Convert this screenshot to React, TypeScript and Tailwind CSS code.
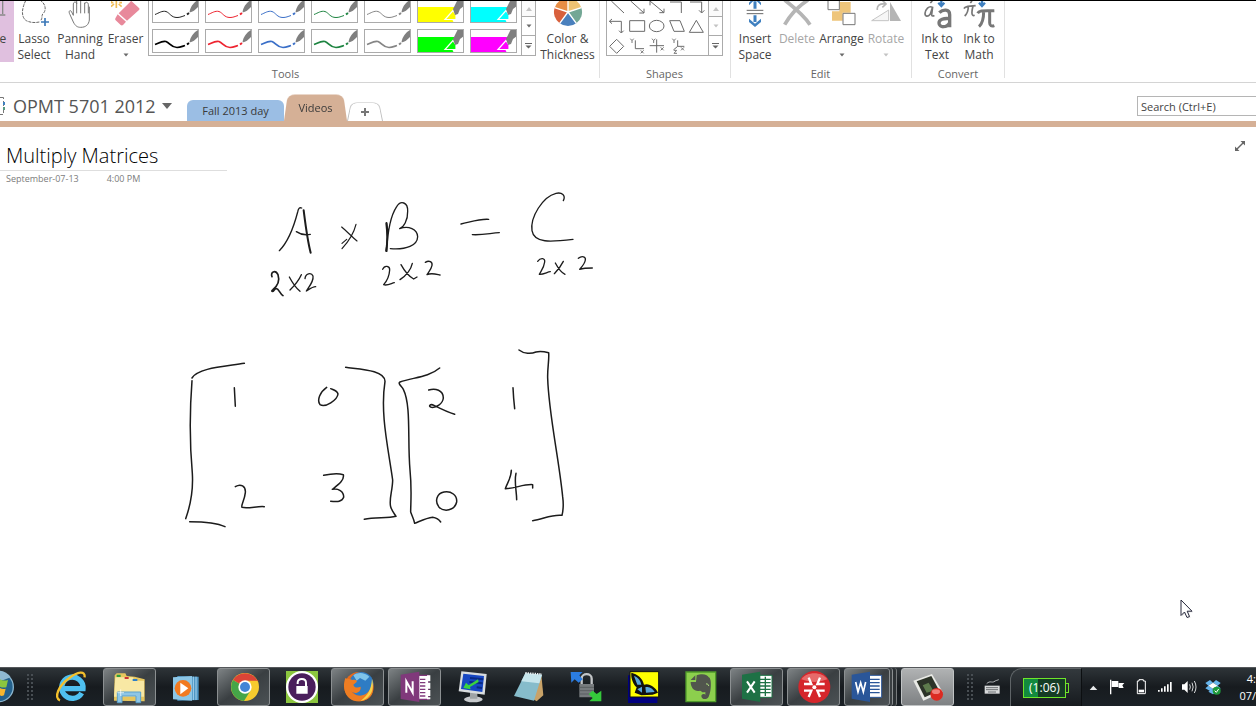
import React from "react";

type IconProps = { box: string; w?: number; h?: number; children: React.ReactNode };

function Icon({ box, w = 30, h = 30, children }: IconProps) {
  return (
    <svg width={w} height={h} viewBox={box} fill="none" aria-hidden="true" className="block shrink-0">
      {children}
    </svg>
  );
}

function Arrow({ faded = false }: { faded?: boolean }) {
  return (
    <svg width="6" height="4" viewBox="0 0 6 4" aria-hidden="true">
      <path d="M0.500 0.500H5.500L3 3.500z" fill={faded ? "#c3c3c3" : "#6a6a6a"} />
    </svg>
  );
}

type ToolProps = {
  lines: string[];
  width: string;
  icon?: React.ReactNode;
  menu?: boolean;
  disabled?: boolean;
  active?: boolean;
};

function Tool({ lines, width, icon, menu, disabled, active }: ToolProps) {
  return (
    <button
      type="button"
      disabled={disabled}
      className={`flex h-[61px] shrink-0 flex-col items-center whitespace-nowrap text-xs leading-4 ${width} ${
        active ? "bg-[#e0c0df]" : ""
      } ${disabled ? "text-[#a6a6a6]" : "text-[#444444]"}`}
    >
      <span className="flex h-[30px] items-start">{icon}</span>
      {lines.map((l) => (
        <span key={l}>{l}</span>
      ))}
      {menu && (
        <span className="flex h-4 items-center">
          <Arrow faded={disabled} />
        </span>
      )}
    </button>
  );
}

function Group({ label, className = "", children }: { label: string; className?: string; children: React.ReactNode }) {
  return (
    <section aria-label={label} className="flex shrink-0">
      <div className={`flex flex-col ${className}`}>
        <div className="flex h-[65px] items-start">{children}</div>
        <div className="text-center text-[11px] leading-4 text-[#666666]">{label}</div>
      </div>
      <div className="h-[77px] w-px bg-[#e1e1e1]" />
    </section>
  );
}

function GalleryScroll({ faded = false }: { faded?: boolean }) {
  return (
    <div className="flex w-[14px] flex-col divide-y divide-[#ababab] border-l border-[#ababab]">
      <button type="button" aria-label="Scroll up" className="flex h-4 items-center justify-center bg-[#fbfbfb]">
        <svg width="6" height="4" viewBox="0 0 6 4"><path d="M0 4H6L3 0z" fill="#c3c3c3" /></svg>
      </button>
      <button type="button" aria-label="Scroll down" className="flex h-[19px] items-center justify-center">
        <Arrow faded={faded} />
      </button>
      <button type="button" aria-label="More" className="flex h-[19px] items-center justify-center">
        <svg width="7" height="6" viewBox="0 0 7 6"><path d="M0 0H7V1H0zM0.500 2.500H6.500L3.500 5.500z" fill="#666" /></svg>
      </button>
    </div>
  );
}

function Pen({ color, thick }: { color: string; thick?: boolean }) {
  return (
    <>
      <path d="M3 15.500C7 14 10 11.500 14 12.500C18 14 19 18.500 25 18.500C28 18.500 30 17.500 33 16.500" stroke={color} strokeWidth={thick ? 1.700 : 1} fill="none" />
      <path d="M35 15.500l2-1.500" stroke={color} strokeWidth="2" />
      <path d="M37.500 13.500C38 8 42 3 46 1V8C43 11 41 13 37.500 13.500z" fill="#7f7f7f" />
    </>
  );
}

function Marker({ color }: { color: string }) {
  return (
    <>
      <path d="M0 8H38L35 20L37 24H0z" fill={color} />
      <path d="M28 20.500L36 11.500L39 16V20.500z" stroke="#fff" strokeWidth="1.200" fill={color} />
      <path d="M36 10L39 4L41 0H47V7L43 10L41 15L38 16z" fill="#7f7f7f" />
    </>
  );
}

const inks = ["#222222", "#ee2430", "#3a6fc8", "#1d8440", "#858585"];

function PenRow({ thick }: { thick?: boolean }) {
  const markers = thick ? ["#00ff00", "#ff00ff"] : ["#ffff00", "#00ffff"];
  const cell = `w-[47px] overflow-hidden border border-[#ababab] ${thick ? "h-6" : "h-[22px] border-t-0"}`;
  const box = thick ? "1 1 45 22" : "1 2 45 21";
  return (
    <div className="flex gap-[6px]">
      {inks.map((c) => (
        <button key={c} type="button" aria-label="Pen" className={cell}>
          <Icon box={box} w={45} h={thick ? 22 : 21}>
            <Pen color={thick && c === "#222222" ? "#000" : c} thick={thick} />
          </Icon>
        </button>
      ))}
      {markers.map((c) => (
        <button key={c} type="button" aria-label="Highlighter" className={cell}>
          <Icon box={box} w={45} h={thick ? 22 : 21}>
            <Marker color={c} />
          </Icon>
        </button>
      ))}
    </div>
  );
}

function Ribbon() {
  return (
    <div className="flex h-[83px] overflow-hidden border-b border-t border-b-[#d4d4d4] border-t-black bg-white">
      <Group label="Tools" className="-ml-8 pl-1">
        <Tool
          active
          width="w-[42px]"
          lines={["Type"]}
          icon={
            <Icon box="-66 3 90 90">
              <path d="M-8 3V42M-16 45H-8M0 45H-8" stroke="#888" strokeWidth="4" transform="translate(16 0)" />
            </Icon>
          }
        />
        <Tool
          width="w-10"
          lines={["Lasso", "Select"]}
          icon={
            <Icon box="57 3 90 90">
              <path d="M120 0C138 12 140 32 128 42C124 50 128 54 122 62M118 66C100 70 84 66 76 60C66 50 66 36 69 24C72 12 74 8 78 0" stroke="#666" strokeWidth="3" strokeDasharray="9 3" />
              <path d="M135 54V78M123 66H147" stroke="#3b78b8" strokeWidth="5" />
            </Icon>
          }
        />
        <Tool
          width="w-[52px]"
          lines={["Panning", "Hand"]}
          icon={
            <Icon box="195 3 90 90">
              <path d="M220 46V12C221 4 229 4 230 12V0M230 40V8M242 40V0M254 40V8M254 12C256 4 265 6 265 14V40M220 46L214 34C208 28 205 36 210 44L220 66C226 78 232 82 242 82C258 82 266 74 268 60V20" stroke="#777" strokeWidth="3" strokeLinejoin="round" />
            </Icon>
          }
        />
        <Tool
          width="w-[39px]"
          lines={["Eraser"]}
          menu
          icon={
            <Icon box="331 3 90 90">
              <path d="M347 0V24M335 0L330 4M331 20L340 12M363 20L354 12M331 8H338M356 8H364" stroke="#f0bb55" strokeWidth="5" />
              <path d="M393 4L415 24C417 26 417 28 415 30L379 62L354 40L389 5C390 3 392 3 393 4z" fill="#e8899b" />
              <path d="M351 43L376 65L367 75C365 77 362 77 360 75L345 61C343 59 343 56 345 53z" fill="#e8899b" />
            </Icon>
          }
        />
        <div className="ml-[3px] flex h-[55px] border-b border-l border-r border-[#ababab]">
          <div className="flex flex-col gap-[6px] pb-px pl-[3px] pr-1">
            <PenRow />
            <PenRow thick />
          </div>
          <GalleryScroll />
        </div>
        <Tool
          width="w-[63px]"
          lines={["Color &", "Thickness"]}
          icon={
            <Icon box="108 3 90 90">
              <path d="M153 36V-6A42 42 0 0 1 193 23z" fill="#eec373" />
              <path d="M153 36L193 23A42 42 0 0 1 178 70z" fill="#73a795" />
              <path d="M153 36L178 70A42 42 0 0 1 128 70z" fill="#4a80bd" />
              <path d="M153 36L128 70A42 42 0 0 1 113 23z" fill="#d8603c" />
              <path d="M153 36L113 23A42 42 0 0 1 153-6z" fill="#e88e45" />
              <path d="M153 36V-6M153 36L193 23M153 36L178 70M153 36L128 70M153 36L113 23" stroke="#fff" strokeWidth="4" />
            </Icon>
          }
        />
      </Group>

      <Group label="Shapes" className="pl-[6px] pr-[7px]">
        <div className="flex h-[55px] border-b border-l border-r border-[#ababab]">
          <Icon box="275 3 303 162" w={101} h={54}>
            <g stroke="#6a6a6a" strokeWidth="3">
              <path d="M288 3L326 39M346 3L386 39M386 26V39H372M404 3L446 38M404 16V3M446 26V38H432M464 6H498V39M524 6H559V38M551 31L559 39L567 31" />
              <path d="M283 64H318V98M290 57L282 64L290 71M311 92L318 99L325 92" />
              <path d="M343 62H388V94H343zM463 62H494L507 94H476zM522 97L543 61L564 97z" />
              <ellipse cx="424" cy="78" rx="22" ry="17" />
              <path d="M283 139L304 118L325 139L304 160z" />
              <path d="M360 121V146H386M403 137H446M424 118V158M487 121V139H507M487 139L474 150" />
            </g>
            <g stroke="#777" strokeWidth="3">
              <path d="M345 116L350 122L355 116M350 122V129M376 151L385 160M385 151L376 160M410 116L415 122L420 116M415 122V129M436 142L445 151M445 142L436 151M471 116L476 122L481 116M476 122V129M497 142L506 151M506 142L497 151M476 151H484L476 160H485" />
            </g>
          </Icon>
          <GalleryScroll faded />
        </div>
      </Group>

      <Group label="Edit" className="pl-[3px] pr-1">
        <Tool
          width="w-[42px]"
          lines={["Insert", "Space"]}
          icon={
            <Icon box="29 3 90 90">
              <path d="M49 31H99M49 41H99" stroke="#666" strokeWidth="3" />
              <path d="M74 26V4M74 46V66" stroke="#3f80c0" strokeWidth="9" />
              <path d="M56 16L74-2L92 16V8L74-10L56 8zM56 56L74 71L92 56V66L74 81L56 66z" fill="#3f80c0" />
            </Icon>
          }
        />
        <Tool
          width="w-[42px]"
          disabled
          lines={["Delete"]}
          icon={
            <Icon box="156 3 90 90">
              <path d="M164 0C182 14 222 46 240 74" stroke="#b5b5b5" strokeWidth="11" />
              <path d="M234 0C206 18 182 42 164 74" stroke="#b5b5b5" strokeWidth="11" />
            </Icon>
          }
        />
        <Tool
          width="w-[47px]"
          lines={["Arrange"]}
          menu
          icon={
            <Icon box="289 3 90 90">
              <path d="M326 6H360V38H326zM304 34H336V62H304z" fill="#eec57b" />
              <path d="M292 0H326V29H292z" fill="#fff" stroke="#777" strokeWidth="3" />
              <path d="M337 40H373V74H337z" fill="#fff" stroke="#777" strokeWidth="3" />
            </Icon>
          }
        />
        <Tool
          width="w-[42px]"
          disabled
          lines={["Rotate"]}
          menu
          icon={
            <Icon box="423 3 90 90">
              <path d="M425 62L476 30V62z" fill="#f6f6f6" stroke="#c4c4c4" strokeWidth="3" />
              <path d="M480 6L513 63H480z" fill="#b5b5b5" />
              <path d="M442 30C440 16 450 10 466 12M458 2L468 12L457 22" stroke="#b5b5b5" strokeWidth="5" />
            </Icon>
          }
        />
      </Group>

      <Group label="Convert" className="px-1">
        <Tool
          width="w-[42px]"
          lines={["Ink to", "Text"]}
          icon={
            <Icon box="575 3 90 90">
              <path d="M606 22C596 16 585 28 584 40C584 50 592 52 600 42L607 20L604 44C604 49 609 49 612 46M600 9L606 3" stroke="#777" strokeWidth="5" />
              <path d="M633 0V14M624 8L633 18L642 8" stroke="#3f80c0" strokeWidth="7" />
              <path d="M627 38C637 28 658 26 658 44V82M658 56C640 54 626 58 626 69C626 84 650 84 658 68" stroke="#777" strokeWidth="10" />
            </Icon>
          }
        />
        <Tool
          width="w-[42px]"
          lines={["Ink to", "Math"]}
          icon={
            <Icon box="700 3 96 90" w={32}>
              <path d="M703 26C708 16 716 20 738 17M716 19C716 32 712 42 705 48M730 18C726 34 724 50 735 46M722 9L727 3" stroke="#777" strokeWidth="5" />
              <path d="M757 0V14M748 8L757 18L766 8" stroke="#3f80c0" strokeWidth="7" />
              <path d="M744 40C750 30 758 33 794 32M762 34C762 54 760 70 748 80M780 34V68C780 78 786 80 794 77" stroke="#777" strokeWidth="9" />
            </Icon>
          }
        />
      </Group>
    </div>
  );
}

function Tabs() {
  return (
    <div className="flex h-[44px] items-end border-b-[6px] border-[#d5b096] bg-white">
      <div className="flex h-full w-[187px] shrink-0 items-center pt-2">
        <svg width="5" height="20" viewBox="0 0 5 20" aria-hidden="true" className="shrink-0">
          <path d="M0 1.500H3.500V18.500H0" stroke="#777" fill="none" strokeDasharray="5 2" />
          <path d="M3 6H5V9H3z" fill="#3f80c0" />
          <path d="M3 11H5V14H3z" fill="#5a9a80" />
        </svg>
        <button type="button" className="flex items-center gap-[6px] whitespace-nowrap pl-2 text-lg leading-6 text-[#555555]">
          OPMT 5701 2012
          <svg width="10" height="6" viewBox="0 0 10 6" aria-hidden="true"><path d="M0 0H10L5 6z" fill="#666" /></svg>
        </button>
      </div>
      <nav className="flex flex-1 items-end text-[11px] leading-4 text-[#3a3a3a]">
        <button type="button" className="h-[21px] w-[97px] whitespace-nowrap rounded-t-md bg-[#9bbee4] text-center">
          Fall 2013 day
        </button>
        <button
          type="button"
          className="relative isolate h-[26px] w-[63px] text-center before:absolute before:inset-x-0 before:bottom-0 before:-z-10 before:h-[31px] before:origin-bottom before:rounded-t-lg before:bg-[#d5b096] before:[transform:perspective(60px)_rotateX(15deg)]"
        >
          Videos
        </button>
        <button
          type="button"
          aria-label="Add section"
          className="relative isolate flex h-[19px] w-[36px] items-center justify-center before:absolute before:inset-x-0 before:bottom-0 before:-z-10 before:h-[26px] before:origin-bottom before:rounded-t-lg before:border before:border-b-0 before:border-[#c0c0c0] before:bg-white before:[transform:perspective(40px)_rotateX(25deg)]"
        >
          <svg width="8" height="8" viewBox="0 0 8 8" aria-hidden="true"><path d="M3 0H5V3H8V5H5V8H3V5H0V3H3z" fill="#777" /></svg>
        </button>
      </nav>
      <input
        type="text"
        aria-label="Search"
        placeholder="Search (Ctrl+E)"
        className="mb-[5px] h-5 w-[119px] shrink-0 border border-r-0 border-[#b5b5b5] px-[3px] text-[11px] text-[#444444] placeholder:text-[#444444]"
      />
    </div>
  );
}

function Ink() {
  return (
    <svg width="600" height="360" viewBox="0 180 600 360" fill="none" className="block" role="img" aria-label="Handwritten matrix multiplication">
      <g transform="translate(250 180) scale(0.33333)" stroke="#1c1c1c" strokeWidth="4" strokeLinecap="round" strokeLinejoin="round">
        <path d="M88 212C112 188 130 146 143 96C145 86 148 81 155 84" />
        <path d="M161 91C166 130 172 180 182 218" strokeWidth="6" />
        <path d="M139 155C152 164 166 166 181 163" />
        <path d="M275 141C290 154 306 170 321 183M318 133C312 158 296 184 276 206M290 178L276 190" strokeWidth="3.500" />
        <path d="M410 128C416 158 413 188 408 213L410 214C412 170 420 110 440 80C452 60 474 66 473 94C474 122 460 142 449 146C476 136 502 148 503 170C502 196 470 210 421 206" />
        <path d="M409 130C413 160 412 190 409 213" strokeWidth="6" />
        <path d="M633 132C662 126 688 116 716 118M667 164C696 166 720 160 748 158" />
        <path d="M940 62C948 46 936 36 918 40C878 50 840 112 846 152C852 190 902 186 969 178" />
        <path d="M66 290C60 276 76 268 84 284C90 302 82 318 68 330C62 334 68 338 76 326C86 322 88 340 99 347" strokeWidth="5" />
        <path d="M118 291C126 306 138 324 150 334M154 284C146 302 132 318 120 330" />
        <path d="M165 296C166 280 184 276 189 288C192 304 176 322 169 333C180 326 188 320 197 320" />
        <path d="M398 268C404 254 420 258 419 270C418 288 408 306 401 314C412 318 424 310 433 308M453 254C464 274 478 290 491 297L501 291M487 250C482 272 466 288 450 299" />
        <path d="M526 247C538 240 548 246 546 256C544 268 536 276 531 284C544 278 556 282 570 285" />
        <path d="M863 244C872 232 886 234 884 246C882 264 872 274 868 283C880 284 892 276 901 275M916 249C924 264 934 278 945 283M940 244C932 260 922 272 913 281" />
        <path d="M985 235C996 226 1008 230 1006 240C1004 252 994 262 989 268C1002 264 1014 264 1027 264" />
      </g>
      <g transform="translate(170 340) scale(0.33333)" stroke="#1c1c1c" strokeWidth="4.500" strokeLinecap="round" strokeLinejoin="round">
        <path d="M223 70C160 80 84 84 66 114M66 122C60 200 58 300 67 400C70 450 60 500 47 536M59 545C98 545 136 546 165 560" />
        <path d="M193 143L196 199M470 142C450 156 440 180 450 194C466 204 502 180 504 162C502 152 492 150 482 146" />
        <path d="M196 440C212 430 228 438 226 458C224 480 212 496 216 502C236 506 262 498 283 500M461 406C480 402 506 400 520 404C524 422 502 436 487 448C504 444 522 454 521 472C514 490 494 484 482 484" />
        <path d="M527 82C570 88 644 90 645 124C630 220 654 320 668 420C668 450 656 480 662 500C666 514 674 522 678 529C650 536 614 530 583 538" />
        <path d="M809 84C776 112 730 112 690 126C682 130 696 140 700 148C724 196 712 300 720 390C726 450 722 490 722 516C726 528 732 538 734 550C754 542 770 534 788 532C800 534 808 540 812 546" />
        <path d="M776 150C796 144 820 150 820 174C818 192 798 204 784 202C774 200 780 190 792 196C812 206 832 216 854 223M1029 143C1030 166 1032 188 1034 206" />
        <path d="M822 456C800 460 794 484 806 500C822 518 854 512 860 486C862 466 844 452 822 456M1024 391C1024 414 1010 432 1006 446C1034 446 1060 432 1088 434V444M1038 400C1032 426 1040 454 1040 479" />
        <path d="M1047 30C1062 42 1084 42 1098 36C1112 32 1128 36 1136 38C1138 60 1132 84 1133 114C1136 220 1166 350 1178 470C1182 500 1178 518 1176 526C1146 522 1118 538 1088 542" />
      </g>
    </svg>
  );
}

function Page() {
  return (
    <main className="relative flex flex-1 items-start justify-between bg-white">
      <div>
        <div className="w-[227px] border-b border-[#dedede] pb-px pl-[6px] pt-4">
          <h1 className="whitespace-nowrap text-xl font-light leading-[26px] text-black">Multiply Matrices</h1>
        </div>
        <p className="flex h-4 gap-7 pl-[6px] text-[9px] font-medium leading-4 text-[#7c7c7c]">
          <span>September-07-13</span>
          <span>4:00 PM</span>
        </p>
        <div className="-mt-[7px]">
          <Ink />
        </div>
      </div>
      <button type="button" aria-label="Full page view" className="mr-[10px] mt-[13px]">
        <svg width="12" height="12" viewBox="0 0 12 12" fill="none" aria-hidden="true">
          <path d="M2 10L10 2" stroke="#666" strokeWidth="1.500" />
          <path d="M6.500 1H11V5.500zM1 6.500V11H5.500z" fill="#666" />
        </svg>
      </button>
      <svg width="14" height="20" viewBox="0 0 14 20" aria-hidden="true" className="absolute bottom-[48px] right-[62px]">
        <path d="M2 2V17.500L5.500 14L8 19.500L10.500 18.500L8.200 13.200H13z" fill="#bbb" opacity="0.500" />
        <path d="M1 1V16.500L4.500 13L7 18.500L9.500 17.500L7.200 12.200H12z" fill="#fff" stroke="#26283c" />
      </svg>
    </main>
  );
}

function Task({ label, box, running, bright, children }: { label: string; box: string; running?: boolean; bright?: boolean; children: React.ReactNode }) {
  const tone = bright
    ? "bg-linear-to-b from-[#b0b2b3] to-[#7e8183] border-[#c0c3c4]"
    : running
      ? "bg-linear-to-br from-[#7e8385] via-[#3a3f42] to-[#4c5255] border-[#8b8f91]"
      : "border-transparent";
  return (
    <button type="button" aria-label={label} className={`flex h-[38px] w-[53px] shrink-0 items-center justify-center overflow-hidden rounded-[3px] border ${tone}`}>
      <Icon box={box} w={53} h={38}>{children}</Icon>
    </button>
  );
}

function Grip() {
  return <div className="h-7 w-2 shrink-0 bg-[radial-gradient(#484e53_1px,transparent_1px)] bg-[size:4px_4px]" />;
}

function Taskbar() {
  return (
    <footer className="flex h-[39px] items-center overflow-hidden border-t border-[#55585b] bg-linear-to-b from-[#2e3438] via-[#171b1f] to-[#1b2126] text-white">
      <button type="button" aria-label="Start" className="shrink-0">
        <Icon box="0 24 42 114" w={14} h={38}>
          <circle cx="-4" cy="81" r="44" fill="#24618c" stroke="#8bb6cf" strokeWidth="4" />
          <path d="M-40 50A44 44 0 0 1 32 52Q0 66-40 64z" fill="#8fb9d2" />
          <path d="M0 58Q10 64 24 60L19 82Q8 84 0 80z" fill="#8cc63f" />
          <path d="M0 84Q8 89 17 86L12 106Q4 110 0 106z" fill="#f7b52c" />
        </Icon>
      </button>
      <div className="flex w-8 shrink-0 justify-center"><Grip /></div>
      <div className="flex shrink-0 gap-1">
        <Task label="Internet Explorer" box="138 24 159 114">
          <path d="M245 99A32 32 0 1 1 249 86H192" stroke="#4fc0f0" strokeWidth="16" />
          <path d="M180 121C160 114 176 76 208 54C232 36 256 30 254 52" stroke="#f5c02c" strokeWidth="7" />
        </Task>
        <Task label="Windows Explorer" running box="309 24 159 114">
          <path d="M344 46L350 40H376L380 48L404 50L434 58V124L342 122z" fill="#e7c65d" />
          <path d="M346 52H400V62H432V110H342z" fill="#f8e8a4" />
          <path d="M350 44H362V51H350z" fill="#2e9e3e" />
          <path d="M374 51H386V57H374z" fill="#c33" />
          <path d="M398 57H412V63H398z" fill="#2d7fc8" />
          <path d="M352 128V96H422V128H408V108H366V128z" fill="#8ec6e6" stroke="#5aa0cc" strokeWidth="3" />
          <path d="M362 88V108M352 98H372" stroke="#fff" strokeWidth="2" />
        </Task>
        <Task label="Media Player" box="480 24 159 114">
          <path d="M532 48L596 50V120L532 122z" fill="#4e96c4" />
          <path d="M588 50V120M580 50V120" stroke="#a7d4ee" strokeWidth="3" />
          <path d="M519 52L576 48V122L519 118z" fill="#8cc6e6" />
          <circle cx="549" cy="85" r="25" fill="#f27a20" />
          <path d="M541 68L565 85L541 103z" fill="#fff" />
        </Task>
        <Task label="Chrome" running box="651 24 159 114">
          <circle cx="735" cy="81" r="42" fill="#f6cb2e" />
          <path d="M735 81L699 60A42 42 0 0 1 771 60L777 62H735z" fill="#db4437" />
          <path d="M699 60A42 42 0 0 0 732 123L752 91L735 81z" fill="#45a548" />
          <circle cx="735" cy="81" r="20" fill="#fff" />
          <circle cx="735" cy="81" r="15" fill="#4285d6" />
        </Task>
        <Task label="Password manager" box="822 24 159 114">
          <path d="M858 33H954V129H858z" fill="#8cc63f" />
          <circle cx="906" cy="81" r="48" fill="#fff" />
          <circle cx="906" cy="81" r="41" fill="#4a1e5c" />
          <path d="M889 78H923V101H889z" fill="#fff" />
          <path d="M893 72V68C893 53 918 53 918 68V80" stroke="#fff" strokeWidth="6" />
        </Task>
        <Task label="Firefox" running box="33 24 159 114">
          <circle cx="117" cy="80" r="44" fill="#e66a1c" />
          <circle cx="124" cy="72" r="36" fill="#2e7cc4" />
          <path d="M100 46C112 36 134 36 148 50L136 62L120 54L110 62z" fill="#7fc4ea" />
          <path d="M76 54C82 58 88 56 98 60C104 58 112 60 110 66L100 74C102 84 114 84 122 80C124 98 104 104 94 94C106 116 148 112 156 72C168 104 144 124 116 124C80 124 64 88 76 54z" fill="#ee7d22" />
          <path d="M156 56C166 92 148 118 122 122C144 106 154 88 156 56z" fill="#f9d24a" />
        </Task>
        <Task label="OneNote" running box="204 24 159 114">
          <path d="M290 46H326V118H290z" fill="#fff" stroke="#80397b" strokeWidth="4" />
          <path d="M300 58H316M300 68H316M300 78H316M300 88H316M300 98H316M300 108H316" stroke="#80397b" strokeWidth="4" />
          <path d="M326 46V118" stroke="#fff" strokeWidth="10" strokeDasharray="18 4" />
          <path d="M242 44L298 35V126L242 117z" fill="#80397b" />
          <path d="M259 98V64L278 98V64" stroke="#fff" strokeWidth="6" />
        </Task>
        <Task label="Remote desktop" box="375 24 159 114">
          <ellipse cx="460" cy="118" rx="28" ry="9" fill="#c6c9cc" />
          <path d="M450 96H472V116H450z" fill="#9ea3a6" />
          <path d="M424 34L500 42L494 104L416 94z" fill="#d8dcde" />
          <path d="M430 41L492 48L487 96L423 87z" fill="#1747c2" />
          <path d="M450 54L490 58M448 66L488 70M470 82L486 84" stroke="#092a86" strokeWidth="6" />
          <path d="M474 58L446 76L438 68L430 84L452 88L450 81L476 66z" fill="#39d33f" />
        </Task>
        <Task label="Notepad" box="546 24 159 114">
          <path d="M664 44L670 106L650 124L640 118z" fill="#c8a268" />
          <path d="M616 40L666 44L642 122L582 108z" fill="#86bccb" />
          <path d="M616 40L666 44L658 70L604 64z" fill="#c6e5ec" />
          <path d="M616 39L666 43" stroke="#e9eef0" strokeWidth="6" strokeDasharray="4 3" />
        </Task>
        <Task label="Secure transfer" box="717 24 159 114">
          <path d="M778 72H822V112H778z" fill="#777b7e" />
          <path d="M778 82H822M778 92H822M778 102H822" stroke="#5b5f62" strokeWidth="3" />
          <path d="M785 72V56C785 38 815 38 815 56V72" stroke="#c2c5c7" strokeWidth="7" />
          <path d="M752 36H788L778 46L788 58L776 68L764 58L754 68z" fill="#2b7de2" />
          <path d="M844 124H808L818 114L806 102L818 92L830 102L844 92z" fill="#35c93b" />
        </Task>
        <Task label="Butterfly" box="-72 24 159 114">
          <path d="M-36 46H52V129H-36z" fill="#000080" />
          <path d="M-30 35H56V111H-30z" fill="#ffff00" stroke="#111" strokeWidth="3" />
          <path d="M-26 38C-8 42 8 54 12 74C26 68 46 80 54 98L38 104L4 106L-16 98L-10 82C-20 74-28 54-26 38z" fill="#111" />
          <path d="M-18 48C-6 52 2 62 4 74L-8 74zM-8 88L6 80L6 98zM16 82C28 78 38 86 44 96L18 98z" fill="#58a5dc" />
        </Task>
        <Task label="Evernote" box="99 24 159 114">
          <path d="M138 36H227V125H138z" fill="#8ccf4d" stroke="#4f9b2a" strokeWidth="4" />
          <path d="M170 46C190 38 204 46 206 52C216 54 214 96 206 110C202 120 184 120 184 108C184 100 196 100 196 106V96C186 100 184 92 180 92C164 96 152 84 152 66H168z" fill="#51554d" />
          <path d="M152 60L166 46V60z" fill="#51554d" />
          <path d="M198 72C202 70 206 74 206 78" stroke="#aee07e" strokeWidth="3" />
        </Task>
        <Task label="Excel" running box="270 24 159 114">
          <path d="M354 46H396V112H354z" fill="#fff" stroke="#1e7145" strokeWidth="3" />
          <path d="M360 58H392M360 68H392M360 78H392M360 88H392M360 98H392M376 50V108" stroke="#1e7145" strokeWidth="4" />
          <path d="M306 44L361 35V126L306 116z" fill="#1e7145" />
          <path d="M321 64L344 98M344 64L321 98" stroke="#fff" strokeWidth="6" />
        </Task>
        <Task label="Snapshot" running box="441 24 159 114">
          <circle cx="523" cy="81" r="48" fill="#d5262b" />
          <path d="M484 58C500 34 546 34 562 58Q523 74 484 58z" fill="#e76a6a" />
          <g stroke="#fff" strokeWidth="7">
            <path d="M506 53L514 72L492 72M540 53L532 72L554 72M506 111L514 92L492 92M540 111L532 92L554 92" />
          </g>
          <circle cx="523" cy="82" r="6" fill="#fff" />
        </Task>
        <div className="flex">
          <button type="button" aria-label="Word" className="flex h-[38px] w-[46px] shrink-0 items-center justify-center overflow-hidden rounded-[3px] border border-[#8b8f91] bg-linear-to-br from-[#7e8385] via-[#3a3f42] to-[#4c5255]">
            <Icon box="616 24 132 114" w={44} h={38}>
              <path d="M684 46H726V112H684z" fill="#fff" stroke="#2a5699" strokeWidth="3" />
              <path d="M690 58H720M690 68H720M690 78H720M690 88H720M690 98H720" stroke="#2a5699" strokeWidth="4" />
              <path d="M636 44L691 35V126L636 116z" fill="#2a5699" />
              <path d="M648 66L655 96L663 68L671 96L678 66" stroke="#fff" strokeWidth="5" />
            </Icon>
          </button>
          <div className="h-[38px] w-[3px] rounded-r-[3px] border-r border-[#8b8f91] bg-[#3a3f42]" />
          <div className="h-[38px] w-1 rounded-r-[3px] border-r border-[#777b7d] bg-[#2c3134]" />
        </div>
        <Task label="Screen recorder" bright box="783 24 159 114">
          <path d="M820 62L876 42L908 96L850 122z" fill="#e9eae6" />
          <path d="M830 64L874 48L898 92L854 112z" fill="#2c3328" />
          <path d="M848 76L866 68L880 92L860 98z" fill="#5d7a4c" />
          <circle cx="890" cy="103" r="19" fill="#dc2b22" />
          <ellipse cx="888" cy="95" rx="12" ry="7" fill="#f0807a" />
        </Task>
      </div>
      <div className="ml-auto flex h-full shrink-0 items-center">
        <div className="flex w-[54px] items-center gap-[10px] pl-[10px]">
          <Grip />
          <Icon box="102 262 48 48" w={16} h={16}>
            <path d="M104 282H149V306H104z" fill="#d8dadb" />
            <path d="M109 288H145M109 294H145M115 301H139" stroke="#34393d" strokeWidth="3" strokeDasharray="4 2" />
            <path d="M110 276C120 266 126 274 132 270C138 266 142 266 146 264" stroke="#b9bcbe" strokeWidth="3" />
          </Icon>
        </div>
        <div className="flex h-full w-[72px] items-center justify-center rounded-tl-xl border-l border-r border-t border-l-[#5f6467] border-r-[#0c0f11] border-t-[#5f6467] bg-linear-to-b from-[#33393d] to-[#171b1f]">
          <div className="flex h-5 w-[43px] items-center justify-center border border-[#6ee62a] bg-linear-to-r from-[#138a3e] from-35% to-[#163c25] to-35% text-xs leading-4">
            (1:06)
          </div>
          <div className="h-[10px] w-[3px] border-y border-r border-[#6ee62a]" />
        </div>
        <div className="flex items-center gap-2 pl-[7px]">
          <div className="pr-[3px]">
            <Icon box="417 279 27 27" w={9} h={9}><path d="M419 300H442L430 287z" fill="#e8eaeb" /></Icon>
          </div>
          <Icon box="480 270 48 48" w={16} h={16}>
            <path d="M485 272V316" stroke="#fff" strokeWidth="4" />
            <path d="M488 276H508V294H488zM509 282H526L520 289L524 297H509z" fill="#fff" />
          </Icon>
          <Icon box="553 270 48 48" w={16} h={16}>
            <path d="M571 272H584V276H590V314H566V276H571z" stroke="#fff" strokeWidth="3" />
            <path d="M570 302H586V310H570z" fill="#fff" />
          </Icon>
          <Icon box="624 270 48 48" w={16} h={16}>
            <path d="M627 308V303H632V308zM636 308V298H641V308zM645 308V292H650V308zM654 308V286H659V308zM663 308V279H668V308z" fill="#fff" />
          </Icon>
          <Icon box="696 270 48 48" w={16} h={16}>
            <path d="M699 286H706L716 276V312L706 302H699z" fill="#fff" />
            <path d="M722 286Q726 294 722 302M729 281Q736 294 729 307M736 276Q746 294 736 312" stroke="#d6d8d9" strokeWidth="3" />
          </Icon>
          <Icon box="768 270 48 48" w={16} h={16}>
            <path d="M769 282L783 273L792 281L778 290zM815 282L801 273L792 281L806 290zM769 298L778 290L792 299L783 306zM815 298L806 290L792 299L801 306zM778 308L792 300L806 308L792 316z" fill="#67b5ec" />
            <path d="M778 290L792 281L806 290L792 299z" fill="#fff" />
            <circle cx="803" cy="305" r="12" fill="#1f9a3c" />
            <path d="M797 305L802 310L809 300" stroke="#fff" strokeWidth="3" />
          </Icon>
        </div>
        <div className="flex w-[35px] flex-col items-end overflow-hidden whitespace-nowrap text-[11px] leading-[17px]">
          <span>4:</span>
          <span>07/</span>
        </div>
      </div>
    </footer>
  );
}

export default function App() {
  return (
    <div className="flex min-h-screen flex-col overflow-hidden bg-white font-['Open_Sans','Noto_Sans',sans-serif]">
      <Ribbon />
      <Tabs />
      <Page />
      <Taskbar />
    </div>
  );
}
